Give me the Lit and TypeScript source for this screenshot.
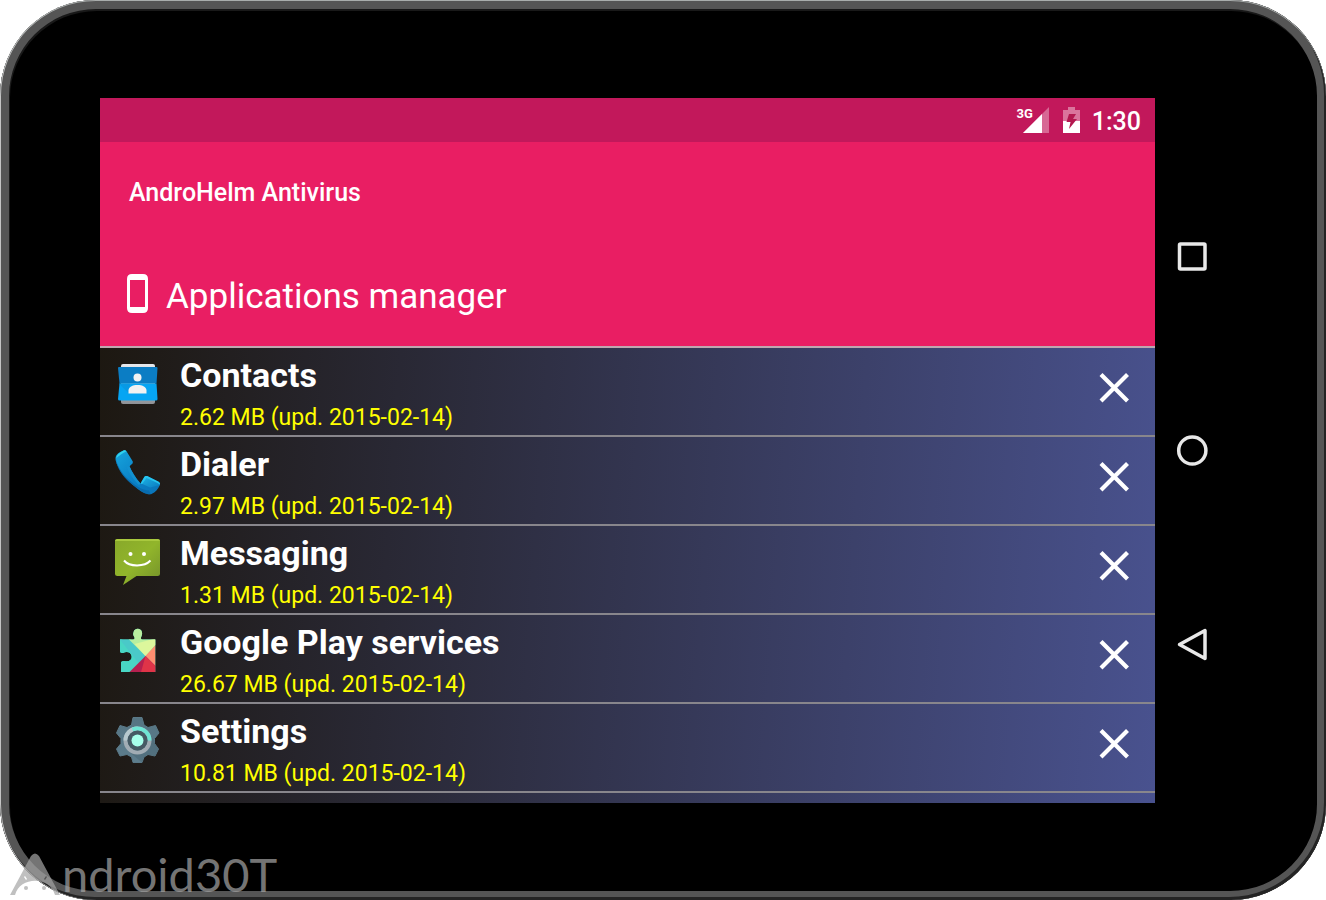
import { LitElement, html, css, svg } from "lit";
import { customElement, property } from "lit/decorators.js";

interface AppEntry {
  name: string;
  size: string;
  updated: string;
  icon: unknown;
}

const contactsIcon = svg`
  <defs>
    <linearGradient id="tab" x1="0" y1="0" x2="0" y2="1"><stop offset="0" stop-color="#e8eaee"/><stop offset="1" stop-color="#8e9196"/></linearGradient>
  </defs>
  <rect x="6" y="4" width="34" height="40" rx="2" fill="url(#tab)"/>
  <path d="M3 8Q3 7 4 7H41.500Q42.500 7 42.500 8L41.500 23.500H4.500Z" fill="#0b7dc4"/>
  <path d="M4.500 23.500H41.500L42.500 39Q42.500 40.500 41 40.500H4.500Q3 40.500 3 39Z" fill="#06a5f3"/>
  <path d="M14 33.500L4.200 24V23.500H15Z" fill="#0a94de" opacity=".7"/>
  <circle cx="22.500" cy="17.500" r="4" fill="#f2f2f2"/>
  <path d="M13.500 33.500V30.500C13.500 27 17.500 25 22.500 25S31.500 27 31.500 30.500V33.500Z" fill="#f2f2f2"/>`;

const dialerIcon = svg`
  <defs>
    <linearGradient id="handset" x1="0" y1="0" x2="1" y2="1"><stop offset="0" stop-color="#17a5dc"/><stop offset=".5" stop-color="#0b83c8"/><stop offset="1" stop-color="#0a73b8"/></linearGradient>
    <linearGradient id="face" x1="0" y1="0" x2="1" y2="1"><stop offset="0" stop-color="#1fb4e4"/><stop offset="1" stop-color="#0a7cc2"/></linearGradient>
  </defs>
  <g transform="translate(-.5 0)">
    <path d="M9 1.500C10 .8 11.300 1.200 12 2.300L18 12C18.700 13.200 18.300 14.500 17.200 15.300L15 17.200C17.500 23 21 28.500 26 34.500L29.500 28.500C30.200 27.300 31.500 26.800 33 27.200L43.500 32.500C45.500 33.500 46 34.800 45.300 36.300C43.500 40 41 43.500 37 45C33.500 46.200 27 43.500 21.500 38.500C12.500 31.500 6.500 25 3 16.500C.3 10.500.2 7.500 3.500 4.500C5.300 2.900 7.300 2.300 9 1.500Z" fill="url(#handset)"/>
    <path d="M1.500 10.500C3 18 9 27 17 33C22 37.500 29 41.500 34.500 41.500L36 45C33 46 28 43.500 21.500 38.500C12 31.500 6 24.500 2.800 16.500C1.800 14 1.400 12 1.500 10.500Z" fill="#0868aa" opacity=".8"/>
    <path d="M15 17.200C17 22.500 21 29 26 34.500L24.500 36C19.500 31.500 14 24 12 17Z" fill="#1391cf"/>
    <path d="M30 28.500Q31.500 27 33 27.300L43.500 32.500Q45.800 33.800 45.200 36L35.500 38.500L27 34.500Z" fill="url(#face)"/>
    <path d="M29.500 28.500C30.200 27.300 31.500 26.800 33 27.200L43.500 32.500C45 33.300 45.700 34.300 45.500 35.500L42 33.500L32 29L27.500 35L26 34.500Z" fill="#27c5ef"/>
    <path d="M2 9C2 6 4.500 4 9 1.500C10 .8 11.300 1.200 12 2.300C8 4 4.500 7 2 9Z" fill="#30d3ee"/>
  </g>`;

const messagingIcon = svg`
  <defs>
    <linearGradient id="bubble" x1="0" y1="0" x2="1" y2="1"><stop offset="0" stop-color="#88a82a"/><stop offset=".5" stop-color="#91b52b"/><stop offset="1" stop-color="#73902a"/></linearGradient>
  </defs>
  <path d="M2.500 1H42.500Q45 1 45 3.500V35.500Q45 38 42.500 38H21.500L8 47L11.500 38H2.500Q0 38 0 35.500V3.500Q0 1 2.500 1Z" fill="url(#bubble)"/>
  <path d="M2.500 1H42.500Q45 1 45 3H0Q0 1 2.500 1Z" fill="#a9c93e"/>
  <circle cx="15.500" cy="16" r="2" fill="#fff"/>
  <circle cx="29" cy="16" r="2" fill="#fff"/>
  <path d="M9 22.500C14.500 29 29.500 29 35.500 22.500" fill="none" stroke="#fff" stroke-width="2"/>`;

const playServicesIcon = svg`
  <defs>
    <clipPath id="puzzle"><path d="M5.500 12.500H18.500Q20.500 12.500 20 10.500C18.500 8 18.500 7 19 5.500C19.500 .5 27 .5 27.500 5.500C27.800 7 27.500 8 26.500 10.500Q26 12.500 28 12.500H41V45H6.500V35.500Q7 33.500 10 34C16 35.500 18.500 31 16.500 27.500C15 24.500 11.500 24.500 8.500 26Q5.500 26.500 5.500 24Z"/></clipPath>
  </defs>
  <g transform="translate(-.5 0)">
    <g clip-path="url(#puzzle)">
      <rect width="46" height="48" fill="#43dcc0"/>
      <path d="M0 7L31 29L15 45H0Z" fill="#48d6c4"/>
      <path d="M5 12L16 12L31 29L24 36Z" fill="#4ac9c8"/>
      <path d="M13 11V0H42V17L31 29Z" fill="#b9ef9f"/>
      <path d="M20 17L42 11V17L31 29Z" fill="#dcf79c"/>
      <path d="M42 17V40L31 29Z" fill="#ff8e70"/>
      <path d="M31 29L42 40V47H13Z" fill="#b5204f"/>
      <path d="M31 29L42 40V47H26Z" fill="#df3448"/>
    </g>
  </g>`;

const settingsIcon = svg`
  <defs>
    <linearGradient id="gear" x1="0" y1="0" x2="0" y2="1"><stop offset="0" stop-color="#557482"/><stop offset="1" stop-color="#5d7d8d"/></linearGradient>
  </defs>
  <g transform="translate(-.5 .5)">
    <path d="M18.500 1H27.500L29.500 8.500L33.500 11L41 9L44.500 16.500L40 22V27L44 32.500L40.500 39.500L33.500 38L29.500 40.500L27.500 46H18.500L17 40.500L12.500 38L5.500 39.500L2 32.500L6.500 27V22L2 16.500L5.500 9L12.500 11L17 8.500Z" fill="url(#gear)" stroke="#5a7988" stroke-width="1" stroke-linejoin="round"/>
    <path d="M33 15L40 24V27L44 32.500L40.500 39.500L33.500 38L29.500 40.500L27.500 46L13 34Z" fill="#47626f" opacity=".4"/>
    <circle cx="23" cy="24" r="12" fill="none" stroke="#a1acb4" stroke-width="4"/>
    <path d="M11 24A12 12 0 0 1 23 12" fill="none" stroke="#b7c9ce" stroke-width="4"/>
    <path d="M18 13.100A12 12 0 0 1 35 24" fill="none" stroke="#6fe5d5" stroke-width="4"/>
    <circle cx="23" cy="24" r="10" fill="#455a64"/>
    <circle cx="23" cy="24" r="6" fill="#a7ffeb"/>
  </g>`;

const apps: AppEntry[] = [
  { name: "Contacts", size: "2.62 MB", updated: "2015-02-14", icon: contactsIcon },
  { name: "Dialer", size: "2.97 MB", updated: "2015-02-14", icon: dialerIcon },
  { name: "Messaging", size: "1.31 MB", updated: "2015-02-14", icon: messagingIcon },
  { name: "Google Play services", size: "26.67 MB", updated: "2015-02-14", icon: playServicesIcon },
  { name: "Settings", size: "10.81 MB", updated: "2015-02-14", icon: settingsIcon },
];

@customElement("app-row")
class AppRow extends LitElement {
  @property({ attribute: false }) app!: AppEntry;

  static styles = css`
    :host {
      display: flex;
      align-items: flex-start;
      box-sizing: border-box;
      height: 89px;
      padding: 0 24px 0 15px;
      border-bottom: 2px solid #88868c;
    }
    .icon {
      flex: none;
      width: 46px;
      height: 48px;
      margin-top: 12px;
    }
    .text {
      flex: 1;
      min-width: 0;
      padding: 7px 0 0 19px;
    }
    .name {
      margin: 0;
      font-size: 34px;
      line-height: 40px;
      font-weight: 700;
      color: #fff;
    }
    .meta {
      margin: 0;
      font-size: 23px;
      line-height: 28px;
      padding-top: 9px;
      color: #ffff00;
    }
    .remove {
      flex: none;
      width: 34px;
      height: 34px;
      margin-top: 23px;
      padding: 0;
      border: 0;
      background: none;
      color: #fff;
    }
    .remove svg {
      display: block;
    }
  `;

  render() {
    return html`
      <svg class="icon" viewBox="0 0 46 48" aria-hidden="true">${this.app.icon}</svg>
      <div class="text">
        <h2 class="name">${this.app.name}</h2>
        <p class="meta">${this.app.size} (upd. ${this.app.updated})</p>
      </div>
      <button class="remove" aria-label="Remove ${this.app.name}">
        <svg width="34" height="34" viewBox="0 0 34 34"><path d="M4 3.500L30.500 30M30.500 3.500L4 30" stroke="currentColor" stroke-width="4.200" /></svg>
      </button>
    `;
  }
}

@customElement("app-root")
class AppRoot extends LitElement {
  static styles = css`
    :host {
      display: block;
      position: relative;
      background: #fff;
      font-family: Roboto, sans-serif;
    }
    .device {
      display: flex;
      box-sizing: border-box;
      min-height: 100vh;
      padding: 98px 97px 97px 100px;
      border-radius: 96px;
      background: #000;
      box-shadow:
        inset 0 1px 0 #a8acab,
        inset 1px 0 0 #c4c4c4,
        inset -1px -2px 0 1px #242424,
        inset 0 0 0 9px #555,
        inset 1px 2px 0 9px #191919;
    }
    .screen {
      flex: 1;
      min-width: 0;
      display: flex;
      flex-direction: column;
      background: linear-gradient(94deg, #1c170f, #49528f);
    }
    .status {
      display: flex;
      align-items: center;
      justify-content: flex-end;
      height: 44px;
      padding-right: 14px;
      background: #c2185b;
      color: #fff;
    }
    .clock {
      font-size: 25px;
      line-height: 32px;
      font-weight: 500;
      padding-top: 4px;
      margin-left: 12px;
    }
    .network {
      font-size: 13px;
      font-weight: 700;
      line-height: 16px;
      align-self: flex-start;
      padding-top: 8px;
    }
    .signal {
      margin-left: -10px;
    }
    .battery {
      margin-left: 14px;
    }
    .header {
      display: flex;
      flex-direction: column;
      gap: 66px;
      box-sizing: border-box;
      height: 206px;
      padding: 36px 26px 0;
      background: #e91e63;
      border-bottom: 2px solid #bfa7af;
      color: #fff;
    }
    .brand {
      margin: 0;
      padding-left: 3px;
      font-size: 25px;
      line-height: 30px;
      font-weight: 500;
    }
    .section {
      display: flex;
      align-items: center;
      gap: 17px;
      margin: 0;
      font-size: 35px;
      line-height: 46px;
      font-weight: 400;
    }
    .section svg {
      margin-bottom: 6px;
    }
    .list {
      flex: 1;
      margin: 0;
      padding: 0;
      list-style: none;
    }
    .nav {
      flex: none;
      display: flex;
      flex-direction: column;
      align-items: center;
      justify-content: space-between;
      width: 74px;
      padding: 141px 0;
      box-sizing: border-box;
    }
    .key {
      padding: 0;
      border: 0;
      background: none;
      width: 36px;
      height: 36px;
    }
    .key svg {
      display: block;
    }
    .watermark {
      position: absolute;
      left: 10px;
      bottom: 0;
      display: flex;
      align-items: center;
      gap: 2px;
      color: #a6a6a6;
      opacity: 0.7;
      font-family: Lato, sans-serif;
      font-size: 47px;
      line-height: 52px;
    }
  `;

  render() {
    return html`
      <main class="device">
        <section class="screen">
          <div class="status">
            <span class="network">3G</span>
            <svg class="signal" width="26" height="26" viewBox="0 0 26 26" aria-hidden="true">
              <path d="M26 0V26H0Z" fill="#fff" opacity=".35" />
              <path d="M19 7V26H0Z" fill="#fff" />
            </svg>
            <svg class="battery" width="17" height="26" viewBox="0 0 17 26" aria-hidden="true">
              <path d="M5 0H12V3H17V14H0V3H5Z" fill="#fff" opacity=".4" />
              <path d="M0 14H17V26H0Z" fill="#fff" />
              <path d="M6 7H13L10 12H14L6 22L7.500 15H3.500Z" fill="#b3184f" />
            </svg>
            <time class="clock">1:30</time>
          </div>
          <header class="header">
            <h1 class="brand">AndroHelm Antivirus</h1>
            <p class="section">
              <svg width="23" height="40" viewBox="0 0 23 40" aria-hidden="true">
                <path fill-rule="evenodd" fill="#fff" d="M6 0H17Q22 0 22 5V34Q22 39 17 39H6Q1 39 1 34V5Q1 0 6 0ZM4 6V33H19V6Z" />
              </svg>
              Applications manager
            </p>
          </header>
          <ul class="list">
            ${apps.map((app) => html`<li><app-row .app=${app}></app-row></li>`)}
          </ul>
        </section>
        <nav class="nav" aria-label="System">
          <button class="key" aria-label="Overview">
            <svg width="36" height="36" viewBox="0 0 36 36"><rect x="5.500" y="5" width="25.500" height="25" rx="1" fill="none" stroke="#e8e8e8" stroke-width="3.500" /></svg>
          </button>
          <button class="key" aria-label="Home">
            <svg width="36" height="36" viewBox="0 0 36 36"><circle cx="18.300" cy="17.500" r="13.600" fill="none" stroke="#e8e8e8" stroke-width="3.500" /></svg>
          </button>
          <button class="key" aria-label="Back">
            <svg width="36" height="36" viewBox="0 0 36 36"><path d="M31 4.500V32.500L5.500 18.500Z" fill="none" stroke="#e8e8e8" stroke-width="3.500" stroke-linejoin="round" /></svg>
          </button>
        </nav>
      </main>
      <div class="watermark">
        <svg width="50" height="44" viewBox="0 0 50 44" aria-hidden="true">
          <path fill="currentColor" fill-rule="evenodd" d="M21 4Q25 -1 29 4L50 43H45C40 24 10 24 5 43H0ZM14 25L16 28L17 27L15 24ZM34 27L35 28L37 25L36 24Z" />
          <circle cx="16" cy="36" r="2" fill="currentColor" />
          <circle cx="34" cy="36" r="2" fill="currentColor" />
        </svg>
        <span>ndroid30T</span>
      </div>
    `;
  }
}
